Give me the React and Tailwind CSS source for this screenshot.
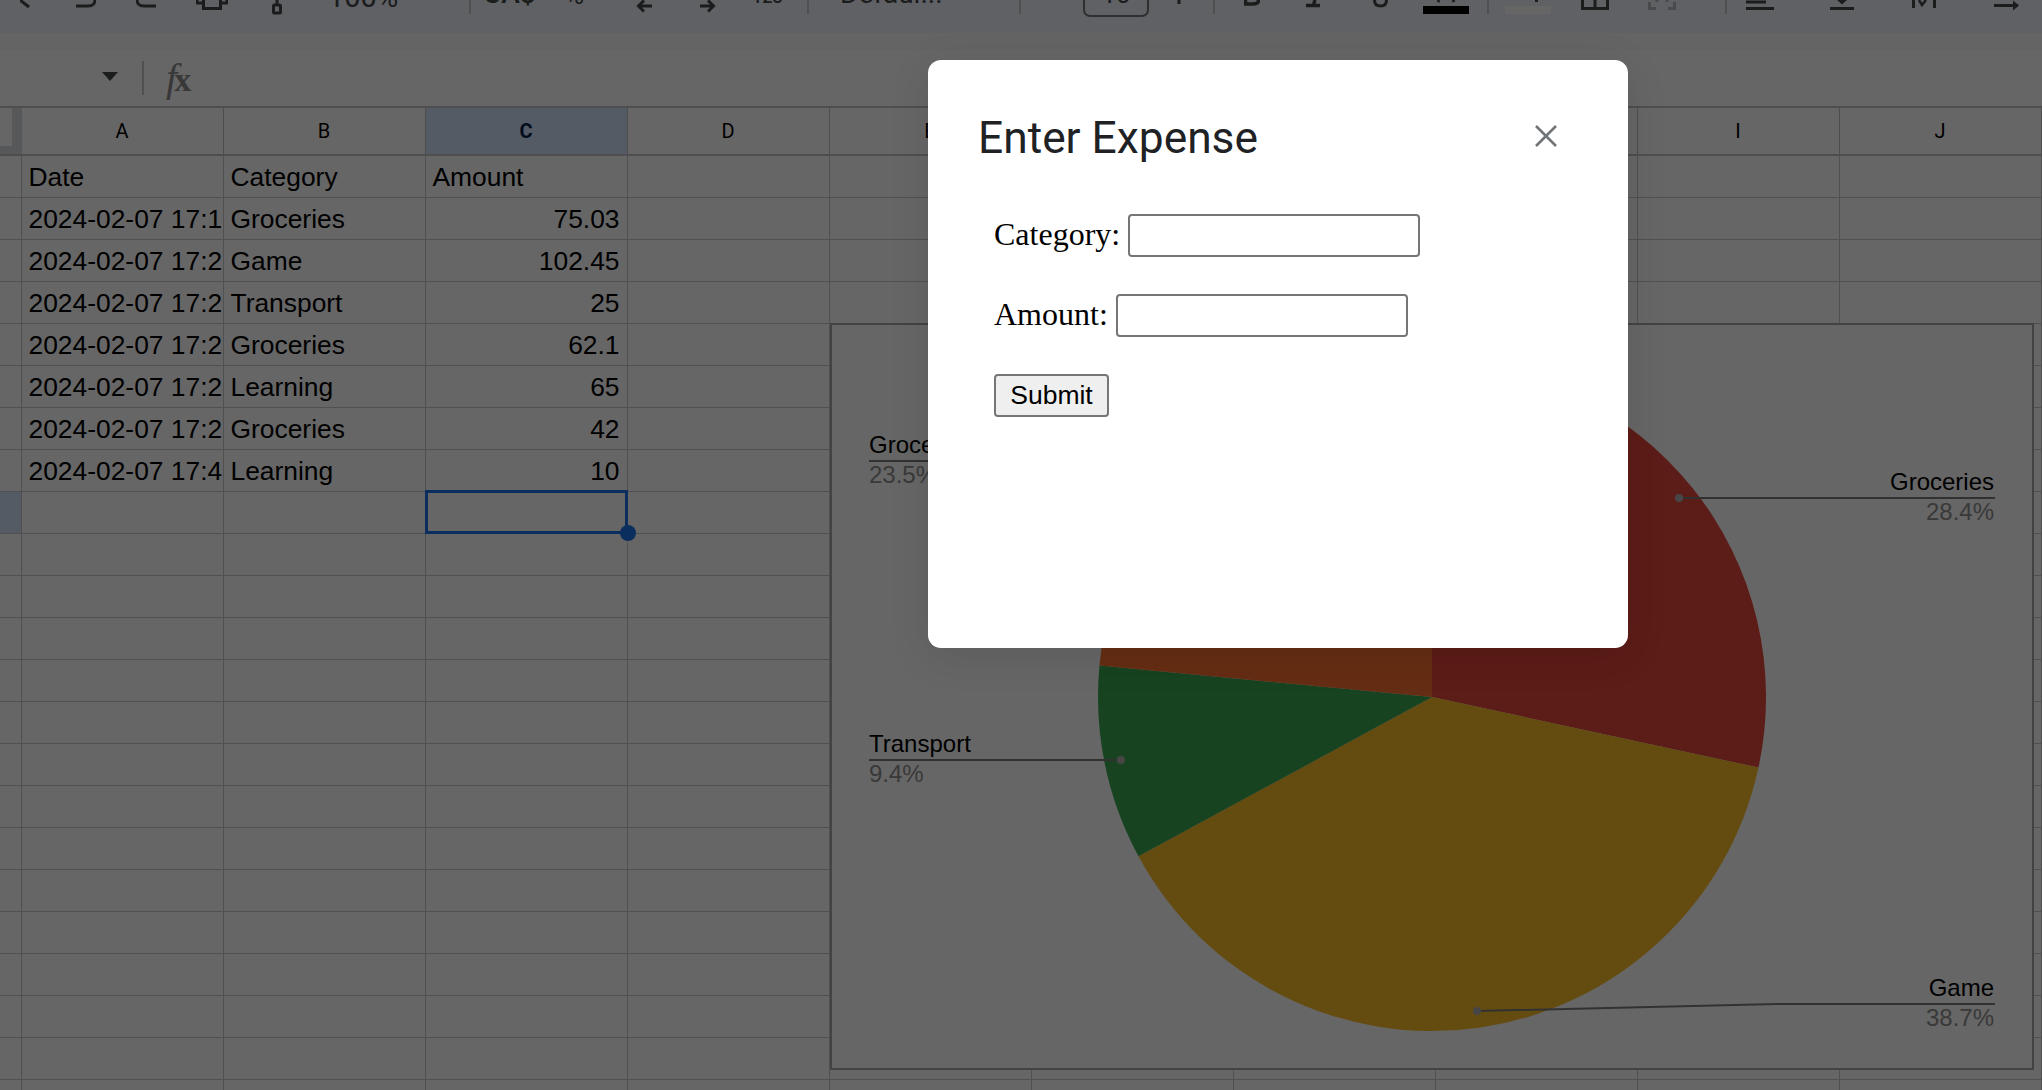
import React from 'react';

const COLUMNS = ['A', 'B', 'C', 'D', 'E', 'F', 'G', 'H', 'I', 'J'];

const EXPENSES = [
  ['Date', 'Category', 'Amount'],
  ['2024-02-07 17:12:41', 'Groceries', '75.03'],
  ['2024-02-07 17:22:10', 'Game', '102.45'],
  ['2024-02-07 17:23:36', 'Transport', '25'],
  ['2024-02-07 17:25:02', 'Groceries', '62.1'],
  ['2024-02-07 17:26:18', 'Learning', '65'],
  ['2024-02-07 17:28:50', 'Groceries', '42'],
  ['2024-02-07 17:41:07', 'Learning', '10'],
];

const ROW_COUNT = 23;
const SELECTED_ROW = 8;

const PIE = { cx: 1432, cy: 697, r: 334 };
const SLICES = [
  { from: 0, to: 102.2, color: '#e6463a' },
  { from: 102.2, to: 241.5, color: '#fbbc2a' },
  { from: 241.5, to: 275.4, color: '#3aa852' },
  { from: 275.4, to: 360, color: '#fd7230' },
];

const slicePath = ({ from, to }) => {
  const point = (deg) => {
    const rad = (deg * Math.PI) / 180;
    return `${PIE.cx + PIE.r * Math.sin(rad)} ${PIE.cy - PIE.r * Math.cos(rad)}`;
  };
  const large = to - from > 180 ? 1 : 0;
  return `M${PIE.cx} ${PIE.cy} L${point(from)} A${PIE.r} ${PIE.r} 0 ${large} 1 ${point(to)} Z`;
};

const ToolIcon = ({ w, className, children }) => (
  <svg
    width={w}
    height="33"
    viewBox={`0 0 ${w} 33`}
    fill="none"
    stroke="#444746"
    strokeWidth="3"
    className={`shrink-0 ${className}`}
  >
    {children}
  </svg>
);

const Divider = ({ className }) => (
  <div className={`w-[2px] h-[14px] shrink-0 bg-[#c7c7c7] ${className}`}></div>
);

const Toolbar = () => (
  <div className="flex items-start h-[33px] overflow-hidden bg-[#edf2fa] text-[#444746] font-['Roboto',sans-serif]">
    <ToolIcon w={10} className="ml-[20px]"><path d="M0 0 L9 7" /></ToolIcon>
    <ToolIcon w={20} className="ml-[46px]"><path d="M0 6 H12 C17 6 19 3 19 0" /></ToolIcon>
    <ToolIcon w={20} className="ml-[40px]"><path d="M20 6 H8 C3 6 1 3 1 0" /></ToolIcon>
    <ToolIcon w={32} className="ml-[40px]">
      <path d="M1 0 V3 H6 M31 0 V3 H26" />
      <path d="M7.5 0 V8.5 H24.5 V0" />
    </ToolIcon>
    <ToolIcon w={10} className="ml-[44px]">
      <path d="M5 0 V4" />
      <rect x="1.5" y="5" width="7" height="8" rx="1" />
    </ToolIcon>
    <div className="ml-[46px] w-[70px] shrink-0 -mt-[17px] text-[29px] leading-[28px] whitespace-nowrap">100%</div>
    <Divider className="ml-[71px]" />
    <div className="ml-[12px] w-[51px] shrink-0 -mt-[20px] text-[28px] leading-[28px] font-medium whitespace-nowrap">CA$</div>
    <div className="ml-[31px] w-[20px] shrink-0 -mt-[19px] text-[26px] leading-[28px] whitespace-nowrap">%</div>
    <ToolIcon w={16} className="ml-[51px]"><path d="M16 6 H3 M8 0.5 L2.5 6 L8 11.5" /></ToolIcon>
    <ToolIcon w={16} className="ml-[48px]"><path d="M0 6 H13 M8 0.5 L13.5 6 L8 11.5" /></ToolIcon>
    <div className="ml-[36px] w-[32px] shrink-0 -mt-[12px] text-[18px] leading-[18px] font-medium whitespace-nowrap">123</div>
    <Divider className="ml-[23px]" />
    <div className="ml-[31px] w-[104px] shrink-0 -mt-[20px] text-[28px] leading-[28px] whitespace-nowrap">Defaul...</div>
    <Divider className="ml-[75px]" />
    <div className="ml-[62px] w-[66px] h-[40px] shrink-0 -mt-[23px] border-2 border-[#747775] rounded-[7px] text-center text-[26px] leading-[30px]">10</div>
    <ToolIcon w={12} className="ml-[24px]"><path d="M6 0 V4" /></ToolIcon>
    <Divider className="ml-[28px]" />
    <ToolIcon w={16} className="ml-[29px]"><path d="M1.5 0 V4 H9 C13 4 14.5 2 14.5 0" strokeWidth="3.5" /></ToolIcon>
    <ToolIcon w={14} className="ml-[46px]"><path d="M0 5.5 H14 M9 0 L7.5 5" strokeWidth="3.5" /></ToolIcon>
    <ToolIcon w={15} className="ml-[53px]"><path d="M1.5 0 C1.5 4 4 6 7.5 6 C11 6 13.5 4 13.5 0" /></ToolIcon>
    <div className="relative ml-[35px] w-[46px] h-[14px] shrink-0">
      <div className="absolute left-0 right-0 bottom-0 h-[8px] bg-black"></div>
      <svg width="46" height="6" viewBox="0 0 46 6" fill="none" stroke="#444746" strokeWidth="3" className="absolute left-0 top-0">
        <path d="M15 2 L16 0 M31 2 L30 0" />
      </svg>
    </div>
    <Divider className="ml-[18px]" />
    <div className="relative ml-[16px] w-[46px] h-[14px] shrink-0">
      <div className="absolute left-0 right-0 bottom-0 h-[8px] bg-white"></div>
      <div className="absolute left-[30px] top-0 w-[3px] h-[2px] bg-[#444746]"></div>
    </div>
    <ToolIcon w={28} className="ml-[30px]"><path d="M1.5 0 V8.5 H26.5 V0 M14 0 V8.5" /></ToolIcon>
    <ToolIcon w={28} className="ml-[39px]">
      <g stroke="#b5b8bc"><path d="M1.5 2 V8.5 H8 M26.5 2 V8.5 H20 M9 0 L9 2 M19 0 L19 2" /></g>
    </ToolIcon>
    <Divider className="ml-[49px]" />
    <ToolIcon w={28} className="ml-[19px]"><path d="M0 2 H20 M0 8.5 H28" /></ToolIcon>
    <ToolIcon w={24} className="ml-[56px]">
      <path d="M0 8.5 H24" />
      <path d="M7 0 L12 4.5 L17 0 Z" fill="#444746" stroke="none" />
    </ToolIcon>
    <ToolIcon w={24} className="ml-[58px]">
      <path d="M1.5 0 V8 M22.5 0 V8" />
      <path d="M7 0 L10 5 L14 0" strokeWidth="2.5" />
    </ToolIcon>
    <ToolIcon w={26} className="ml-[58px]">
      <path d="M0 5.5 H24" />
      <path d="M19 0.5 L25 5.5 L19 10.5 Z" fill="#444746" stroke="none" />
    </ToolIcon>
  </div>
);

const FormulaBar = () => (
  <div className="flex items-center h-[56px] bg-white">
    <svg width="16" height="9" viewBox="0 0 16 9" className="ml-[102px] shrink-0 -mt-[3px]">
      <path d="M0 0 H16 L8 9 Z" fill="#444746" />
    </svg>
    <div className="ml-[24px] w-[2px] h-[34px] bg-[#c7c7c7] shrink-0"></div>
    <div className="ml-[22px] font-['Liberation_Serif',serif] text-[40px] leading-none text-[#8c8c8c]">
      <span className="italic -mr-[3px]">f</span>
      <span className="font-bold text-[34px]">x</span>
    </div>
  </div>
);

const Cell = ({ value, align, selected }) => (
  <div className="relative h-[42px] border-r border-b border-[#c8c8c8]">
    <div
      className={`h-full flex items-center pl-[7px] pr-[7px] pt-[2px] overflow-hidden whitespace-nowrap text-[26.4px] text-black font-['Liberation_Sans',Arial,sans-serif] ${align === 'right' ? 'justify-end' : ''}`}
    >
      {value}
    </div>
    {selected && (
      <div className="absolute z-10 -left-[1px] -top-[2px] -right-[1px] -bottom-[1px] border-[3px] border-[#1a73e8]">
        <div className="absolute -right-[11px] -bottom-[10px] w-[16px] h-[16px] rounded-full bg-[#1a73e8]"></div>
      </div>
    )}
  </div>
);

const Sheet = () => (
  <div className="grid grid-cols-[21.5px_repeat(10,202px)] border-t-2 border-[#c4c4c4]">
    <div className="relative h-[48px] border-b-2 border-[#c4c4c4] bg-[#dadce0]">
      <div className="absolute left-0 top-0 w-[12px] h-[38px] bg-white"></div>
    </div>
    {COLUMNS.map((col, i) => (
      <div
        key={col}
        className={`h-[48px] flex items-center justify-center border-r border-b-2 border-[#c4c4c4] font-['Roboto',sans-serif] text-[20px] ${i === 2 ? 'bg-[#d3e3fd] text-[#041e49] font-bold' : 'bg-white text-black'}`}
      >
        {col}
      </div>
    ))}
    {Array.from({ length: ROW_COUNT }).map((_, row) => (
      <React.Fragment key={row}>
        <div className={`h-[42px] border-r border-b border-[#c8c8c8] ${row === SELECTED_ROW ? 'bg-[#d3e3fd]' : ''}`}></div>
        {COLUMNS.map((col, c) => (
          <Cell
            key={col}
            value={EXPENSES[row] ? EXPENSES[row][c] : ''}
            align={c === 2 && row > 0 ? 'right' : 'left'}
            selected={row === SELECTED_ROW && c === 2}
          />
        ))}
      </React.Fragment>
    ))}
  </div>
);

const ChartLabel = ({ x, y, anchor, name, percent }) => (
  <g textAnchor={anchor} fontSize="24">
    <text x={x} y={y - 8} fill="#000000">{name}</text>
    <text x={x} y={y + 22} fill="#909090">{percent}</text>
  </g>
);

// floating chart, sits over the sheet like in Sheets
const PieChart = () => (
  <div className="absolute z-20 left-[830px] top-[323px] w-[1204px] h-[747px] bg-white border-2 border-[#a8a8a8]">
    <svg width="1200" height="743" viewBox="832 325 1200 743" className="block font-['Liberation_Sans',Arial,sans-serif]">
      {SLICES.map((s) => (
        <path key={s.color} d={slicePath(s)} fill={s.color} />
      ))}
      <g fill="none" stroke="#7c7c7c" strokeWidth="2">
        <path d="M869 461 H1130" />
        <path d="M869 760 H1121" />
        <path d="M1679 498 H1995" />
        <path d="M1477 1011 L1777 1004 H1995" />
      </g>
      <g fill="#b0b0b0">
        <circle cx="1121" cy="760" r="4" />
        <circle cx="1679" cy="498" r="4" />
        <circle cx="1477" cy="1011" r="4" />
      </g>
      <ChartLabel x={869} y={461} anchor="start" name="Groceries" percent="23.5%" />
      <ChartLabel x={869} y={760} anchor="start" name="Transport" percent="9.4%" />
      <ChartLabel x={1994} y={498} anchor="end" name="Groceries" percent="28.4%" />
      <ChartLabel x={1994} y={1004} anchor="end" name="Game" percent="38.7%" />
    </svg>
  </div>
);

const ExpenseDialog = () => (
  <div className="absolute z-40 left-[928px] top-[60px] w-[700px] h-[588px] bg-white rounded-[13px] shadow-[0_8px_40px_rgba(0,0,0,0.1)]">
    <div className="flex items-center justify-between pl-[50px] pr-[71px] pt-[52px]">
      <h1 className="font-['Roboto',sans-serif] text-[44.3px] leading-[52px] text-[#202124]">Enter Expense</h1>
      <svg width="22" height="22" viewBox="0 0 22 22" fill="none" stroke="#70757a" strokeWidth="2.6" className="-mt-[4px]">
        <path d="M1 1 L21 21 M21 1 L1 21" />
      </svg>
    </div>
    <form className="flex flex-col items-start gap-[37px] pl-[66px] mt-[50px] font-['Liberation_Serif','Times_New_Roman',serif] text-[32px] leading-[43px] text-black">
      <label className="flex items-center gap-[8px]">
        <span className="-mt-[2px]">Category:</span>
        <input type="text" className="w-[292px] h-[43px] border-2 border-[#767676] rounded-[4px] bg-white" />
      </label>
      <label className="flex items-center gap-[8px]">
        <span className="-mt-[2px]">Amount:</span>
        <input type="text" className="w-[292px] h-[43px] border-2 border-[#767676] rounded-[4px] bg-white" />
      </label>
      <button type="button" className="w-[115px] h-[43px] border-2 border-[#767676] rounded-[4px] bg-[#efefef] font-['Liberation_Sans',Arial,sans-serif] text-[26.5px] leading-none text-black">
        Submit
      </button>
    </form>
  </div>
);

export default function App() {
  return (
    <div className="relative w-[2042px] h-[1090px] overflow-hidden bg-white">
      <Toolbar />
      <div className="h-[17px] bg-[#f9fbfd]"></div>
      <FormulaBar />
      <Sheet />
      <PieChart />
      {/* Dialog backdrop */}
      <div className="absolute z-30 inset-0 bg-black/60"></div>
      <ExpenseDialog />
    </div>
  );
}
